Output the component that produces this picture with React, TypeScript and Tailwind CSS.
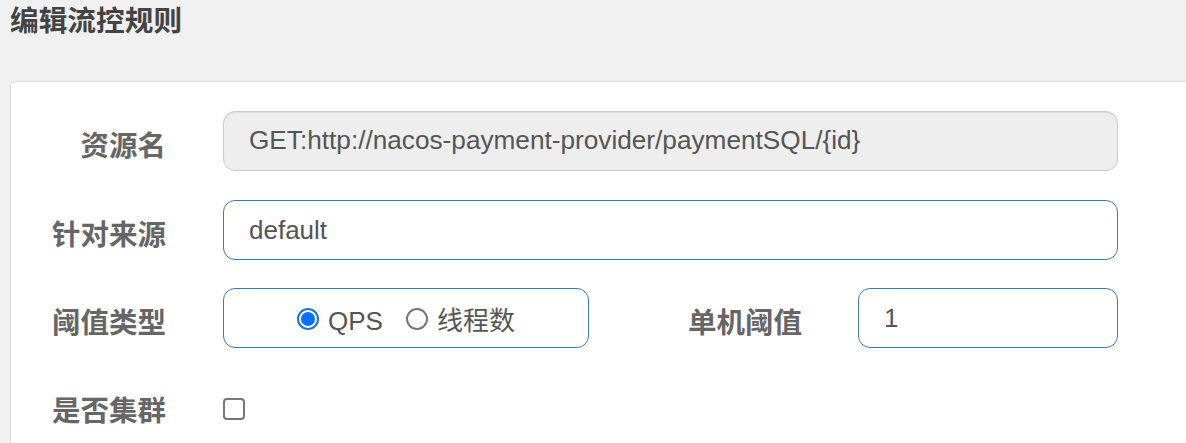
import React from 'react';

const cjk = "font-['Liberation_Sans','Noto_Sans_CJK_SC',sans-serif]";

const Label = ({ text, width }: { text: string; width: string }) => (
  <div className={`${width} shrink-0 translate-y-[5px] text-right text-[28.5px] font-bold text-[#666] leading-none`}>{text}</div>
);

const App = () => {
  return (
    <div className={`w-[1186px] h-[443px] overflow-hidden bg-[#f0f0f0] ${cjk}`}>
      <h1 className="pl-[10px] text-[28.7px] font-bold leading-[42px] text-[#444]">编辑流控规则</h1>

      <div className="ml-[10px] mt-[39px] w-[1300px] h-[400px] rounded-[6px] border border-[#ddd] bg-white pt-[29px]">
        {/* 资源名 */}
        <div className="flex items-center h-[60px] mb-[29px]">
          <Label text="资源名" width="w-[155px]" />
          <div className="ml-[57px] flex h-full w-[895px] items-center rounded-[12px] border border-[#ccc] bg-[#eee] pl-[25px] text-[26.2px] text-[#555] shadow-[inset_0_1px_1px_rgba(0,0,0,0.075)]">
            GET:http://nacos-payment-provider/paymentSQL/{'{id}'}
          </div>
        </div>

        {/* 针对来源 */}
        <div className="flex items-center h-[60px] mb-[28px]">
          <Label text="针对来源" width="w-[155px]" />
          <div className="ml-[57px] flex h-full w-[895px] items-center rounded-[12px] border border-[#3c7ab8] bg-white pl-[25px] text-[26px] text-[#555]">
            default
          </div>
        </div>

        {/* 阈值类型 / 单机阈值 */}
        <div className="flex items-center h-[60px] mb-[28px]">
          <Label text="阈值类型" width="w-[155px]" />
          <div className="ml-[57px] flex h-full w-[366px] items-center justify-center rounded-[12px] border border-[#3c7ab8] bg-white text-[26px] text-[#555]">
            <span className="flex items-center">
              <span className="mt-[2px] flex h-[22px] w-[22px] items-center justify-center rounded-full border-2 border-[#1a73e8] bg-white">
                <span className="h-[14px] w-[14px] rounded-full bg-[#0d6efd]" />
              </span>
              <span className="ml-[9px] mt-[7px]">QPS</span>
            </span>
            <span className="ml-[23px] flex items-center">
              <span className="mt-[2px] h-[22px] w-[22px] rounded-full border-2 border-[#777] bg-white" />
              <span className="ml-[9px] mt-[7px]">线程数</span>
            </span>
          </div>
          <Label text="单机阈值" width="w-[213px]" />
          <div className="ml-[56px] flex h-full w-[260px] items-center rounded-[12px] border border-[#3c7ab8] bg-white pl-[25px] text-[26px] text-[#555]">
            1
          </div>
        </div>

        {/* 是否集群 */}
        <div className="flex items-center h-[60px]">
          <Label text="是否集群" width="w-[155px]" />
          <div className="ml-[57px] mt-[6px] h-[22px] w-[22px] rounded-[4px] border-2 border-[#777] bg-white" />
        </div>
      </div>
    </div>
  );
};

export default App;
